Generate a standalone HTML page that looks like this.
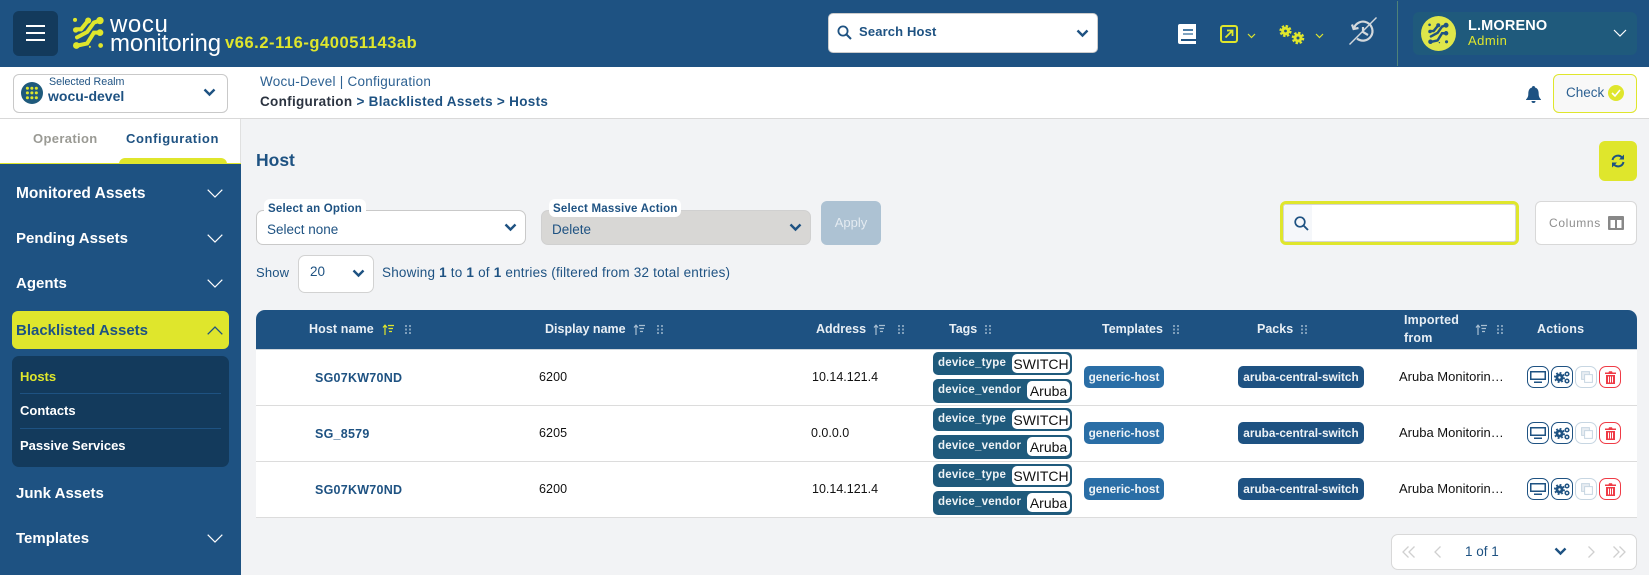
<!DOCTYPE html>
<html>
<head>
<meta charset="utf-8">
<title>Wocu Monitoring</title>
<style>
html,body{margin:0;padding:0}
body{width:1649px;height:575px;overflow:hidden;position:relative;background:#f2f3f5;font-family:"Liberation Sans",sans-serif;color:#1e5282}
.a,.a *{box-sizing:border-box}
.a{position:absolute;white-space:nowrap}
.t{position:absolute;white-space:nowrap;line-height:16px}
svg{display:block;position:absolute;overflow:visible}
.side{font-weight:700;font-size:15px;color:#fff;left:16px}
.sub{font-weight:700;font-size:13px;color:#fff;left:20px}
.th{font-weight:700;font-size:12.5px;color:#e8eff5;line-height:16px}
.td{font-size:12.5px;color:#111}
.host{font-weight:700;font-size:12.5px;color:#1e5282;letter-spacing:.25px}
.tag{position:absolute;box-sizing:border-box;left:933px;height:24px;background:#1f5a7c;border-radius:5px;color:#eef3f6;font-weight:700;font-size:11.5px;letter-spacing:.2px;line-height:22px;padding-left:5px;width:139px;white-space:nowrap}
.tag b{position:absolute;box-sizing:border-box;top:2px;right:2px;height:19px;background:#fff;color:#111;font-weight:400;font-size:14px;letter-spacing:0;line-height:20px;border-radius:5px;text-align:center}
.pill{position:absolute;height:22px;border-radius:5px;color:#eef3f6;font-weight:700;font-size:11.8px;line-height:22px;text-align:center;white-space:nowrap}
.act{position:absolute;box-sizing:border-box;width:22px;height:22px;border-radius:7px;border:1.1px solid #1e5282;background:#fff}
</style>
</head>
<body>
<!-- header -->
<div class="a" style="left:0;top:0;width:1649px;height:67px;background:#1e5282"></div>
<div class="a" style="left:13px;top:11px;width:45px;height:45px;background:#133a5c;border-radius:6px"></div>
<div class="a" style="left:26px;top:25px;width:19px;height:2px;background:#fff"></div>
<div class="a" style="left:26px;top:32px;width:19px;height:2px;background:#fff"></div>
<div class="a" style="left:26px;top:39px;width:19px;height:2px;background:#fff"></div>
<svg style="left:73px;top:17px" width="31" height="32" viewBox="0 0 92 94"><g stroke="#dfe62c" stroke-width="12" stroke-linecap="round" fill="none"><path d="M45 10L24 36H10"/><path d="M80 10L62 16L42 44L12 60"/><path d="M80 46L62 46L42 78L14 84"/></g><g fill="#dfe62c"><circle cx="6" cy="8" r="6"/><circle cx="45" cy="10" r="9"/><circle cx="80" cy="10" r="11"/><circle cx="8" cy="38" r="8"/><circle cx="80" cy="46" r="10"/><circle cx="10" cy="84" r="10"/><circle cx="50" cy="88" r="3"/><circle cx="82" cy="84" r="7"/></g></svg>
<div class="t" style="left:110px;top:13px;font-size:24px;line-height:24px;color:#fff;letter-spacing:.6px">wocu</div>
<div class="t" style="left:110px;top:32px;font-size:24px;line-height:24px;color:#fff;letter-spacing:-.1px">monitoring</div>
<div class="t" style="left:225px;top:35px;font-size:16.5px;font-weight:700;color:#dfe62c;letter-spacing:.55px">v66.2-116-g40051143ab</div>

<div class="a" style="left:828px;top:13px;width:270px;height:40px;background:#fff;border-radius:5px;border:1px solid #ccc"></div>
<svg style="left:837px;top:25px" width="15" height="15" viewBox="0 0 15 15"><circle cx="6" cy="6" r="4.6" fill="none" stroke="#1e5282" stroke-width="1.8"/><path d="M9.5 9.5L14 14" stroke="#1e5282" stroke-width="2"/></svg>
<div class="t" style="left:859px;top:24px;font-size:13px;font-weight:700;color:#1e5282;letter-spacing:.15px">Search Host</div>
<svg style="left:1076px;top:29px" width="13" height="9" viewBox="0 0 13 9"><path d="M1.5 1.5L6.5 6.5L11.500 1.5" fill="none" stroke="#1e5282" stroke-width="2.4"/></svg>

<!-- header icons -->
<svg style="left:1178px;top:24px" width="18" height="20" viewBox="0 0 18 20"><path d="M2 0H18V15H3V17H18V20H2A2 2 0 0 1 0 18V2A2 2 0 0 1 2 0Z" fill="#fff"/><rect x="5" y="5" width="10" height="2" fill="#4a7ca5"/><rect x="5" y="9" width="10" height="2" fill="#7fa3c0"/></svg>
<svg style="left:1220px;top:25px" width="18" height="18" viewBox="0 0 18 18"><rect x="1" y="1" width="16" height="16" rx="2" fill="none" stroke="#dfe62c" stroke-width="2"/><path d="M5.500 12.500L12 6M7 5.500H12.500V11" fill="none" stroke="#dfe62c" stroke-width="1.8"/></svg>
<svg style="left:1247px;top:33px" width="9" height="6" viewBox="0 0 9 6"><path d="M1 1L4.500 4.500L8 1" fill="none" stroke="#dfe62c" stroke-width="1.2"/></svg>
<svg style="left:1280px;top:24px" width="25" height="21" viewBox="0 0 25 21"><g fill="none" stroke="#dfe62c"><circle cx="5.500" cy="7" r="2.900" stroke-width="3"/><circle cx="5.500" cy="7" r="5" stroke-width="2.200" stroke-dasharray="2.400 1.530"/><circle cx="18" cy="14" r="3" stroke-width="3"/><circle cx="18" cy="14" r="5.200" stroke-width="2.200" stroke-dasharray="2.400 1.680"/></g></svg>
<svg style="left:1315px;top:33px" width="9" height="6" viewBox="0 0 9 6"><path d="M1 1L4.500 4.500L8 1" fill="none" stroke="#dfe62c" stroke-width="1.2"/></svg>
<svg style="left:1349px;top:17px" width="28" height="28" viewBox="0 0 28 28"><g fill="none" stroke="#d3d8dc" stroke-width="2.2"><path d="M5 11A9.500 9.500 0 1 1 8 21.500"/><path d="M3 7.500L4.600 12L9.500 11"/><path d="M14 10V15L19 18"/></g><path d="M27.500 .5L.5 27.500" stroke="#d3d8dc" stroke-width="1.4"/></svg>
<div class="a" style="left:1397px;top:1px;width:1px;height:65px;background:#4f8278"></div>
<div class="a" style="left:1413px;top:12px;width:224px;height:43px;background:#1f5a7c;border-radius:6px"></div>
<div class="a" style="left:1421px;top:16px;width:35px;height:35px;background:#dfe64a;border-radius:50%"></div>
<svg style="left:1428px;top:23px" width="21" height="21" viewBox="0 0 92 94"><g stroke="#1e5282" stroke-width="11" stroke-linecap="round" fill="none"><path d="M45 10L24 36H10"/><path d="M80 10L62 16L42 44L12 60"/><path d="M80 46L62 46L42 78L14 84"/></g><g fill="#1e5282"><circle cx="6" cy="8" r="6"/><circle cx="45" cy="10" r="9"/><circle cx="80" cy="10" r="11"/><circle cx="8" cy="38" r="8"/><circle cx="80" cy="46" r="10"/><circle cx="10" cy="84" r="10"/><circle cx="50" cy="88" r="3"/><circle cx="82" cy="84" r="7"/></g></svg>
<div class="t" style="left:1468px;top:18px;font-size:14.5px;font-weight:700;color:#fff;letter-spacing:.15px">L.MORENO</div>
<div class="t" style="left:1468px;top:33px;font-size:13px;color:#dfe62c;letter-spacing:.5px">Admin</div>
<svg style="left:1613px;top:29px" width="14" height="9" viewBox="0 0 14 9"><path d="M1 1L7 7L13 1" fill="none" stroke="#fff" stroke-width="1.2"/></svg>

<!-- subbar -->
<div class="a" style="left:0;top:67px;width:1649px;height:52px;background:#fff;border-bottom:1px solid #d9d9d9"></div>
<div class="a" style="left:13px;top:74px;width:215px;height:39px;background:#fff;border:1px solid #c9c9c9;border-radius:6px"></div>
<div class="a" style="left:21px;top:82px;width:22px;height:22px;border-radius:50%;background:#1f5a7c"></div>
<svg style="left:26px;top:87px" width="12" height="12" viewBox="0 0 92 94"><g fill="#dfe62c"><circle cx="10" cy="10" r="12"/><circle cx="45" cy="10" r="12"/><circle cx="80" cy="10" r="12"/><circle cx="10" cy="46" r="12"/><circle cx="45" cy="46" r="12"/><circle cx="80" cy="46" r="12"/><circle cx="10" cy="84" r="12"/><circle cx="45" cy="84" r="12"/><circle cx="80" cy="84" r="12"/></g></svg>
<div class="t" style="left:49px;top:74px;font-size:10.7px;color:#1e5282">Selected Realm</div>
<div class="t" style="left:48px;top:88px;font-size:14px;font-weight:700;color:#1e5282">wocu-devel</div>
<svg style="left:203px;top:88px" width="13" height="9" viewBox="0 0 13 9"><path d="M1.500 1.500L6.500 6.500L11.500 1.500" fill="none" stroke="#1e5282" stroke-width="2.400"/></svg>
<div class="t" style="left:260px;top:74px;font-size:13.5px;color:#2d6192;letter-spacing:.25px">Wocu-Devel | Configuration</div>
<div class="t" style="left:260px;top:94px;font-size:13.5px;font-weight:700;color:#1e5282;letter-spacing:.3px"><span style="color:#2b3340">Configuration</span> &gt; Blacklisted Assets &gt; Hosts</div>
<svg style="left:1526px;top:86px" width="15" height="17" viewBox="0 0 15 17"><path d="M7.500 0A1.500 1.500 0 0 1 9 1.500C12 2.300 12.700 5 12.700 8C12.700 10.500 13.500 12 15 13.500V14H0V13.500C1.500 12 2.300 10.500 2.300 8C2.300 5 3 2.300 6 1.500A1.500 1.500 0 0 1 7.500 0Z" fill="#1e5282"/><path d="M5.500 15H9.500A2 2 0 0 1 5.500 15Z" fill="#1e5282"/></svg>
<div class="a" style="left:1553px;top:74px;width:84px;height:39px;background:#f8f8f8;border:1.5px solid #dfe62c;border-radius:6px"></div>
<div class="t" style="left:1566px;top:85px;font-size:13.5px;color:#2d6192">Check</div>
<div class="a" style="left:1608px;top:85px;width:16px;height:16px;border-radius:50%;background:#dfe62c"></div>
<svg style="left:1611px;top:89px" width="10" height="8" viewBox="0 0 10 8"><path d="M1 4L4 7L9 1" fill="none" stroke="#fff" stroke-width="1.600"/></svg>

<!-- sidebar -->
<div class="a" style="left:0;top:119px;width:241px;height:45px;background:#fff;border-right:1px solid #e0e0e0"></div>
<div class="a" style="left:0;top:163px;width:241px;height:412px;background:#1e5282;border-top:1px solid #dfe62c"></div>
<div class="a" style="left:119px;top:158px;width:108px;height:6px;background:#dfe62c;border-radius:6px 6px 0 0"></div>
<div class="t" style="left:33px;top:131px;font-size:13px;font-weight:700;color:#9a9a94;letter-spacing:.35px">Operation</div>
<div class="t" style="left:126px;top:131px;font-size:13px;font-weight:700;color:#1e5282;letter-spacing:.6px">Configuration</div>
<div class="t side" style="top:186px;font-size:15.5px">Monitored Assets</div>
<div class="t side" style="top:231px">Pending Assets</div>
<div class="t side" style="top:276px">Agents</div>
<svg style="left:207px;top:189px" width="16" height="9" viewBox="0 0 16 9"><path d="M.7 .7L8 8L15.300 .7" fill="none" stroke="#fff" stroke-width="1.200"/></svg>
<svg style="left:207px;top:234px" width="16" height="9" viewBox="0 0 16 9"><path d="M.7 .7L8 8L15.300 .7" fill="none" stroke="#fff" stroke-width="1.200"/></svg>
<svg style="left:207px;top:279px" width="16" height="9" viewBox="0 0 16 9"><path d="M.7 .7L8 8L15.300 .7" fill="none" stroke="#fff" stroke-width="1.200"/></svg>
<div class="a" style="left:12px;top:311px;width:217px;height:38px;background:#dfe62c;border-radius:6px"></div>
<div class="t side" style="top:323px;color:#1e5282">Blacklisted Assets</div>
<svg style="left:207px;top:326px" width="16" height="9" viewBox="0 0 16 9"><path d="M.7 8.300L8 1L15.300 8.300" fill="none" stroke="#1e5282" stroke-width="1.300"/></svg>
<div class="a" style="left:12px;top:356px;width:217px;height:111px;background:#133a5c;border-radius:7px"></div>
<div class="a" style="left:20px;top:393px;width:201px;height:1px;background:#1e5282"></div>
<div class="a" style="left:20px;top:428px;width:201px;height:1px;background:#1e5282"></div>
<div class="t sub" style="top:369px;color:#dfe62c">Hosts</div>
<div class="t sub" style="top:403px">Contacts</div>
<div class="t sub" style="top:438px">Passive Services</div>
<div class="t side" style="top:486px">Junk Assets</div>
<div class="t side" style="top:531px">Templates</div>
<svg style="left:207px;top:534px" width="16" height="9" viewBox="0 0 16 9"><path d="M.7 .7L8 8L15.300 .7" fill="none" stroke="#fff" stroke-width="1.200"/></svg>

<!-- main top -->
<div class="t" style="left:256px;top:152px;font-size:17.5px;font-weight:700;color:#1e5282">Host</div>
<div class="a" style="left:1599px;top:141px;width:38px;height:40px;background:#dfe62c;border-radius:6px"></div>
<svg style="left:1611px;top:154px" width="14" height="14" viewBox="0 0 14 14"><g fill="none" stroke="#1e5282" stroke-width="2"><path d="M1.500 6A5.500 5.500 0 0 1 11 3.500"/><path d="M12.500 8A5.500 5.500 0 0 1 3 10.500"/></g><path d="M13 .5V5.500H8ZM1 13.500V8.500H6Z" fill="#1e5282"/></svg>

<div class="a" style="left:256px;top:210px;width:270px;height:35px;background:#fff;border:1px solid #c9c9c9;border-radius:7px"></div>
<div class="a" style="left:264px;top:199px;width:102px;height:18px;background:#fff;border-radius:6px"></div>
<div class="t" style="left:268px;top:201px;font-size:11.5px;font-weight:700;color:#1e5282;letter-spacing:.2px">Select an Option</div>
<div class="t" style="left:267px;top:222px;font-size:13.5px;color:#1e5282">Select none</div>
<svg style="left:504px;top:223px" width="13" height="9" viewBox="0 0 13 9"><path d="M1.500 1.500L6.500 6.500L11.500 1.500" fill="none" stroke="#1e5282" stroke-width="2.400"/></svg>
<div class="a" style="left:541px;top:210px;width:270px;height:35px;background:#d8d7d5;border:1px solid #d0d0d0;border-radius:7px"></div>
<div class="a" style="left:549px;top:199px;width:132px;height:18px;background:#fff;border-radius:6px"></div>
<div class="t" style="left:553px;top:201px;font-size:11.5px;font-weight:700;color:#1e5282;letter-spacing:.2px">Select Massive Action</div>
<div class="t" style="left:552px;top:222px;font-size:13.5px;color:#1e5282">Delete</div>
<svg style="left:789px;top:223px" width="13" height="9" viewBox="0 0 13 9"><path d="M1.500 1.500L6.500 6.500L11.500 1.500" fill="none" stroke="#1e5282" stroke-width="2.400"/></svg>
<div class="a" style="left:821px;top:201px;width:60px;height:44px;background:#adc2d3;border-radius:6px;color:#e4ebf1;font-size:13px;line-height:44px;text-align:center">Apply</div>

<div class="a" style="left:1280px;top:201px;width:239px;height:44px;background:#fff;border:3px solid #dfe62c;border-radius:6px;box-shadow:inset 0 0 0 1px #d5d5d5"></div>
<div class="a" style="left:1284px;top:205px;width:28px;height:36px;background:#f5f7fa;border-radius:4px 0 0 4px"></div>
<svg style="left:1294px;top:216px" width="15" height="15" viewBox="0 0 15 15"><circle cx="6" cy="6" r="4.800" fill="none" stroke="#1e5282" stroke-width="1.700"/><path d="M9.500 9.500L14 14" stroke="#1e5282" stroke-width="1.900"/></svg>
<div class="a" style="left:1535px;top:201px;width:102px;height:44px;background:#fff;border:1px solid #d8d8d8;border-radius:6px"></div>
<div class="t" style="left:1549px;top:215px;font-size:12px;color:#8e8e8e;letter-spacing:.65px">Columns</div>
<svg style="left:1608px;top:216px" width="16" height="14" viewBox="0 0 16 14"><path fill="#888" d="M1 0H15A1 1 0 0 1 16 1V13A1 1 0 0 1 15 14H1A1 1 0 0 1 0 13V1A1 1 0 0 1 1 0ZM2.500 4V12H7V4ZM9 4V12H13.500V4Z"/></svg>

<div class="t" style="left:256px;top:265px;font-size:13px;color:#1e5282;letter-spacing:.15px">Show</div>
<div class="a" style="left:298px;top:255px;width:76px;height:38px;background:#fff;border:1px solid #d2d2d2;border-radius:7px"></div>
<div class="t" style="left:310px;top:264px;font-size:13.5px;color:#1e5282">20</div>
<svg style="left:352px;top:269px" width="13" height="9" viewBox="0 0 13 9"><path d="M1.500 1.500L6.500 6.500L11.500 1.500" fill="none" stroke="#1e5282" stroke-width="2.400"/></svg>
<div class="t" style="left:382px;top:265px;font-size:13.5px;color:#1e5282;letter-spacing:.2px">Showing <b>1</b> to <b>1</b> of <b>1</b> entries (filtered from 32 total entries)</div>

<!-- table -->
<div class="a" style="left:256px;top:310px;width:1381px;height:39px;background:#1e5282;border-radius:9px 9px 0 0"></div>
<div class="a" style="left:256px;top:349px;width:1381px;height:168px;background:#fff;border-top:1px solid #cfd6dc"></div>
<div class="a" style="left:256px;top:405px;width:1381px;height:1px;background:#dcdcdc"></div>
<div class="a" style="left:256px;top:461px;width:1381px;height:1px;background:#dcdcdc"></div>
<div class="a" style="left:256px;top:517px;width:1381px;height:1px;background:#dcdcdc"></div>

<div class="t th" style="left:309px;top:321px;letter-spacing:.1px">Host name</div>
<div class="t th" style="left:545px;top:321px">Display name</div>
<div class="t th" style="left:816px;top:321px">Address</div>
<div class="t th" style="left:949px;top:321px">Tags</div>
<div class="t th" style="left:1102px;top:321px">Templates</div>
<div class="t th" style="left:1257px;top:321px">Packs</div>
<div class="t th" style="left:1404px;top:311px;line-height:18px;letter-spacing:.2px">Imported<br>from</div>
<div class="t th" style="left:1537px;top:321px;letter-spacing:.2px">Actions</div>

<!-- sort icons -->
<svg style="left:382px;top:324px" width="12" height="11" viewBox="0 0 12 11"><g fill="none" stroke="#dfe62c" stroke-width="1.200"><path d="M3 11V1.500M1 3.500L3 1.200L5 3.500"/><path d="M6 1.500H12M6.500 4.500H11M7 7.500H10"/></g></svg>
<svg style="left:633px;top:324px" width="12" height="11" viewBox="0 0 12 11"><g fill="none" stroke="#a9bfd2" stroke-width="1.200"><path d="M3 11V1.500M1 3.500L3 1.200L5 3.500"/><path d="M6 1.500H12M6.500 4.500H11M7 7.500H10"/></g></svg>
<svg style="left:873px;top:324px" width="12" height="11" viewBox="0 0 12 11"><g fill="none" stroke="#a9bfd2" stroke-width="1.200"><path d="M3 11V1.500M1 3.500L3 1.200L5 3.500"/><path d="M6 1.500H12M6.500 4.500H11M7 7.500H10"/></g></svg>
<svg style="left:1475px;top:324px" width="12" height="11" viewBox="0 0 12 11"><g fill="none" stroke="#a9bfd2" stroke-width="1.200"><path d="M3 11V1.500M1 3.500L3 1.200L5 3.500"/><path d="M6 1.500H12M6.500 4.500H11M7 7.500H10"/></g></svg>
<!-- grips -->
<svg style="left:405px;top:325px" width="6" height="9" viewBox="0 0 6 9"><path d="M0 0h2v2H0zM4 0h2v2H4zM0 3.500h2v2H0zM4 3.500h2v2H4zM0 7h2v2H0zM4 7h2v2H4z" fill="#7f9fbb"/></svg>
<svg style="left:657px;top:325px" width="6" height="9" viewBox="0 0 6 9"><path d="M0 0h2v2H0zM4 0h2v2H4zM0 3.500h2v2H0zM4 3.500h2v2H4zM0 7h2v2H0zM4 7h2v2H4z" fill="#7f9fbb"/></svg>
<svg style="left:898px;top:325px" width="6" height="9" viewBox="0 0 6 9"><path d="M0 0h2v2H0zM4 0h2v2H4zM0 3.500h2v2H0zM4 3.500h2v2H4zM0 7h2v2H0zM4 7h2v2H4z" fill="#7f9fbb"/></svg>
<svg style="left:985px;top:325px" width="6" height="9" viewBox="0 0 6 9"><path d="M0 0h2v2H0zM4 0h2v2H4zM0 3.500h2v2H0zM4 3.500h2v2H4zM0 7h2v2H0zM4 7h2v2H4z" fill="#7f9fbb"/></svg>
<svg style="left:1173px;top:325px" width="6" height="9" viewBox="0 0 6 9"><path d="M0 0h2v2H0zM4 0h2v2H4zM0 3.500h2v2H0zM4 3.500h2v2H4zM0 7h2v2H0zM4 7h2v2H4z" fill="#7f9fbb"/></svg>
<svg style="left:1301px;top:325px" width="6" height="9" viewBox="0 0 6 9"><path d="M0 0h2v2H0zM4 0h2v2H4zM0 3.500h2v2H0zM4 3.500h2v2H4zM0 7h2v2H0zM4 7h2v2H4z" fill="#7f9fbb"/></svg>
<svg style="left:1497px;top:325px" width="6" height="9" viewBox="0 0 6 9"><path d="M0 0h2v2H0zM4 0h2v2H4zM0 3.500h2v2H0zM4 3.500h2v2H4zM0 7h2v2H0zM4 7h2v2H4z" fill="#7f9fbb"/></svg>

<!-- row 1 -->
<div class="t host" style="left:315px;top:370px">SG07KW70ND</div>
<div class="t td" style="left:539px;top:369px;letter-spacing:.1px">6200</div>
<div class="t td" style="left:812px;top:369px">10.14.121.4</div>
<div class="tag" style="top:352px;height:23px">device_type<b style="width:58px">SWITCH</b></div>
<div class="tag" style="top:379px">device_vendor<b style="width:43px">Aruba</b></div>
<div class="pill" style="left:1084px;top:366px;width:80px;background:#2a6ea6">generic-host</div>
<div class="pill" style="left:1238px;top:366px;width:126px;background:#1e5282">aruba-central-switch</div>
<div class="t td" style="left:1399px;top:369px;font-size:13px;width:106px;overflow:hidden;text-overflow:ellipsis">Aruba Monitoring Integration</div>
<!-- row 2 -->
<div class="t host" style="left:315px;top:426px">SG_8579</div>
<div class="t td" style="left:539px;top:425px;letter-spacing:.1px">6205</div>
<div class="t td" style="left:811px;top:425px">0.0.0.0</div>
<div class="tag" style="top:408px;height:23px">device_type<b style="width:58px">SWITCH</b></div>
<div class="tag" style="top:435px">device_vendor<b style="width:43px">Aruba</b></div>
<div class="pill" style="left:1084px;top:422px;width:80px;background:#2a6ea6">generic-host</div>
<div class="pill" style="left:1238px;top:422px;width:126px;background:#1e5282">aruba-central-switch</div>
<div class="t td" style="left:1399px;top:425px;font-size:13px;width:106px;overflow:hidden;text-overflow:ellipsis">Aruba Monitoring Integration</div>
<!-- row 3 -->
<div class="t host" style="left:315px;top:482px">SG07KW70ND</div>
<div class="t td" style="left:539px;top:481px;letter-spacing:.1px">6200</div>
<div class="t td" style="left:812px;top:481px">10.14.121.4</div>
<div class="tag" style="top:464px;height:23px">device_type<b style="width:58px">SWITCH</b></div>
<div class="tag" style="top:491px">device_vendor<b style="width:43px">Aruba</b></div>
<div class="pill" style="left:1084px;top:478px;width:80px;background:#2a6ea6">generic-host</div>
<div class="pill" style="left:1238px;top:478px;width:126px;background:#1e5282">aruba-central-switch</div>
<div class="t td" style="left:1399px;top:481px;font-size:13px;width:106px;overflow:hidden;text-overflow:ellipsis">Aruba Monitoring Integration</div>

<!-- actions -->
<div class="act" style="left:1527px;top:366px"></div>
<svg style="left:1530px;top:371px" width="16" height="12" viewBox="0 0 16 12"><path d="M0 0H16V9H0ZM1.500 1.500V7.500H14.500V1.500ZM4 10.500H12V12H4Z" fill="#1e5282"/></svg>
<div class="act" style="left:1551px;top:366px"></div>
<svg style="left:1554px;top:371px" width="16" height="13" viewBox="0 0 16 13"><g fill="none" stroke="#1e5282"><circle cx="5.500" cy="6.500" r="2.600" stroke-width="2.800"/><circle cx="5.500" cy="6.500" r="4.600" stroke-width="1.800" stroke-dasharray="1.800 1.810"/><circle cx="13" cy="3" r="1.800" stroke-width="1.500"/><circle cx="13" cy="10" r="1.800" stroke-width="1.500"/></g></svg>
<div class="act" style="left:1575px;top:366px;border-color:#c7d6e2"></div>
<svg style="left:1581px;top:371px" width="12" height="12" viewBox="0 0 12 12"><path d="M.6 .6H8.400V8.400H.6Z" fill="#e8edf2" stroke="#c7d6e2"/><path d="M3.600 3.600H11.400V11.400H3.600Z" fill="#fff" stroke="#c7d6e2"/></svg>
<div class="act" style="left:1599px;top:366px;border-color:#ef3b46"></div>
<svg style="left:1605px;top:371px" width="11" height="13" viewBox="0 0 11 13"><path d="M0 1.500H3.500L4 .3H7L7.500 1.500H11V3H0ZM1 4H10V13H1ZM3 5.500V11.500H4V5.500ZM5 5.500V11.500H6V5.500ZM7 5.500V11.500H8V5.500Z" fill="#ef3b46"/></svg>

<div class="act" style="left:1527px;top:422px"></div>
<svg style="left:1530px;top:427px" width="16" height="12" viewBox="0 0 16 12"><path d="M0 0H16V9H0ZM1.500 1.500V7.500H14.500V1.500ZM4 10.500H12V12H4Z" fill="#1e5282"/></svg>
<div class="act" style="left:1551px;top:422px"></div>
<svg style="left:1554px;top:427px" width="16" height="13" viewBox="0 0 16 13"><g fill="none" stroke="#1e5282"><circle cx="5.500" cy="6.500" r="2.600" stroke-width="2.800"/><circle cx="5.500" cy="6.500" r="4.600" stroke-width="1.800" stroke-dasharray="1.800 1.810"/><circle cx="13" cy="3" r="1.800" stroke-width="1.500"/><circle cx="13" cy="10" r="1.800" stroke-width="1.500"/></g></svg>
<div class="act" style="left:1575px;top:422px;border-color:#c7d6e2"></div>
<svg style="left:1581px;top:427px" width="12" height="12" viewBox="0 0 12 12"><path d="M.6 .6H8.400V8.400H.6Z" fill="#e8edf2" stroke="#c7d6e2"/><path d="M3.600 3.600H11.400V11.400H3.600Z" fill="#fff" stroke="#c7d6e2"/></svg>
<div class="act" style="left:1599px;top:422px;border-color:#ef3b46"></div>
<svg style="left:1605px;top:427px" width="11" height="13" viewBox="0 0 11 13"><path d="M0 1.500H3.500L4 .3H7L7.500 1.500H11V3H0ZM1 4H10V13H1ZM3 5.500V11.500H4V5.500ZM5 5.500V11.500H6V5.500ZM7 5.500V11.500H8V5.500Z" fill="#ef3b46"/></svg>

<div class="act" style="left:1527px;top:478px"></div>
<svg style="left:1530px;top:483px" width="16" height="12" viewBox="0 0 16 12"><path d="M0 0H16V9H0ZM1.500 1.500V7.500H14.500V1.500ZM4 10.500H12V12H4Z" fill="#1e5282"/></svg>
<div class="act" style="left:1551px;top:478px"></div>
<svg style="left:1554px;top:483px" width="16" height="13" viewBox="0 0 16 13"><g fill="none" stroke="#1e5282"><circle cx="5.500" cy="6.500" r="2.600" stroke-width="2.800"/><circle cx="5.500" cy="6.500" r="4.600" stroke-width="1.800" stroke-dasharray="1.800 1.810"/><circle cx="13" cy="3" r="1.800" stroke-width="1.500"/><circle cx="13" cy="10" r="1.800" stroke-width="1.500"/></g></svg>
<div class="act" style="left:1575px;top:478px;border-color:#c7d6e2"></div>
<svg style="left:1581px;top:483px" width="12" height="12" viewBox="0 0 12 12"><path d="M.6 .6H8.400V8.400H.6Z" fill="#e8edf2" stroke="#c7d6e2"/><path d="M3.600 3.600H11.400V11.400H3.600Z" fill="#fff" stroke="#c7d6e2"/></svg>
<div class="act" style="left:1599px;top:478px;border-color:#ef3b46"></div>
<svg style="left:1605px;top:483px" width="11" height="13" viewBox="0 0 11 13"><path d="M0 1.500H3.500L4 .3H7L7.500 1.500H11V3H0ZM1 4H10V13H1ZM3 5.500V11.500H4V5.500ZM5 5.500V11.500H6V5.500ZM7 5.500V11.500H8V5.500Z" fill="#ef3b46"/></svg>

<!-- pagination -->
<div class="a" style="left:1391px;top:534px;width:246px;height:36px;background:#fff;border:1px solid #d8d8d8;border-radius:7px"></div>
<svg style="left:1402px;top:546px" width="13" height="12" viewBox="0 0 13 12"><path d="M6.500 .5L1 6L6.500 11.500M12.500 .5L7 6L12.500 11.500" fill="none" stroke="#d0d0d0" stroke-width="1.300"/></svg>
<svg style="left:1434px;top:546px" width="7" height="12" viewBox="0 0 7 12"><path d="M6.500 .5L1 6L6.500 11.500" fill="none" stroke="#d0d0d0" stroke-width="1.300"/></svg>
<div class="t" style="left:1465px;top:544px;font-size:13.500px;color:#1e5282">1 of 1</div>
<svg style="left:1554px;top:547px" width="13" height="9" viewBox="0 0 13 9"><path d="M1.500 1.500L6.500 6.500L11.500 1.500" fill="none" stroke="#1e5282" stroke-width="2.400"/></svg>
<svg style="left:1588px;top:546px" width="7" height="12" viewBox="0 0 7 12"><path d="M.5 .5L6 6L.5 11.500" fill="none" stroke="#d0d0d0" stroke-width="1.300"/></svg>
<svg style="left:1613px;top:546px" width="13" height="12" viewBox="0 0 13 12"><path d="M.5 .5L6 6L.5 11.500M6.500 .5L12 6L6.500 11.500" fill="none" stroke="#d0d0d0" stroke-width="1.300"/></svg>
</body>
</html>
